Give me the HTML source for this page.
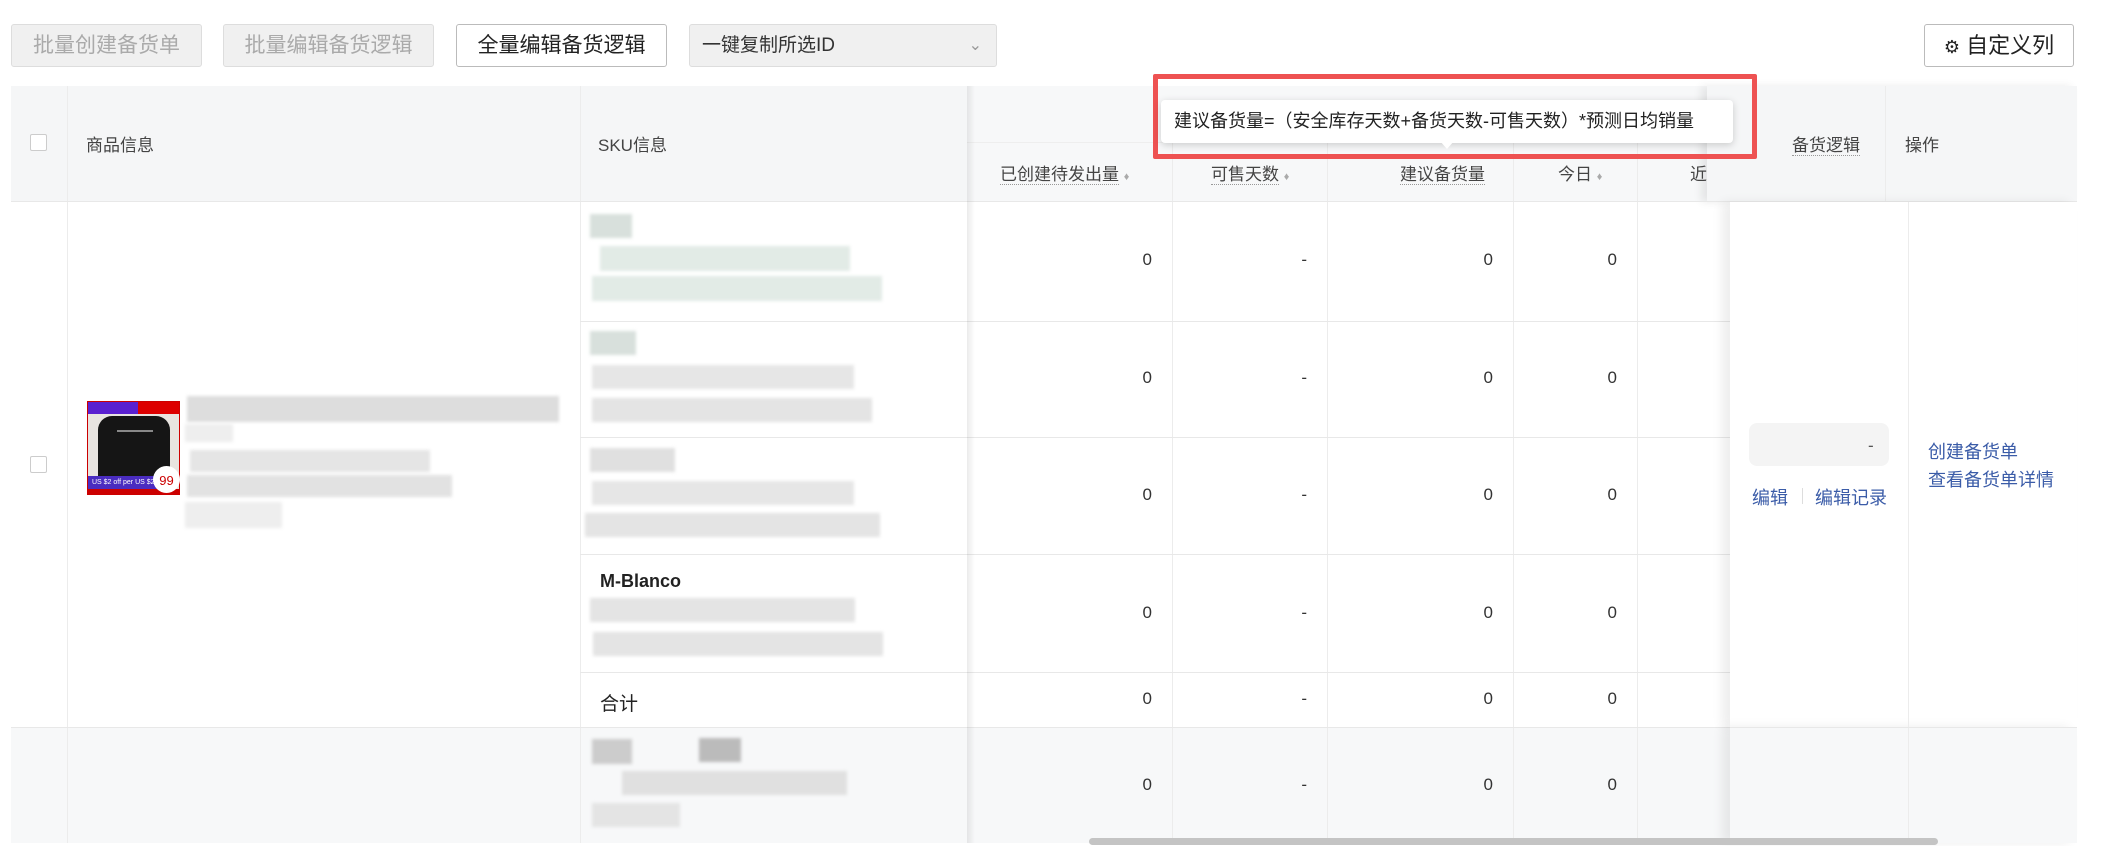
<!DOCTYPE html>
<html><head><meta charset="utf-8"><style>
*{margin:0;padding:0;box-sizing:border-box}
body{width:2121px;height:846px;background:#fff;position:relative;overflow:hidden;font-family:"Liberation Sans","Noto Sans CJK SC",sans-serif;color:#333}
.a{position:absolute}
.btn{position:absolute;top:24px;height:43px;border:1px solid #ddd;border-radius:3px;background:#f0f0f0;color:#aaa;font-size:21px;line-height:41px;text-align:center}
.hd{background:#f5f6f7}
.t{position:absolute;font-size:17px;color:#444;white-space:nowrap}
.hl{position:absolute;height:1px;background:#e8e8e8}
.vl{position:absolute;width:1px;background:#ececec}
.n{position:absolute;font-size:17px;color:#333;text-align:right}
.b{position:absolute;background:#ddd;filter:blur(1.5px)}
.lnk{color:#3b5ca8}
u{text-decoration:none;border-bottom:1px dotted #999}
.s{font-size:11px;color:#aaa}
</style></head><body>
<!-- toolbar -->
<div class="btn" style="left:11px;width:191px">批量创建备货单</div>
<div class="btn" style="left:223px;width:211px">批量编辑备货逻辑</div>
<div class="btn" style="left:456px;width:211px;background:#fff;border-color:#bbb;color:#222">全量编辑备货逻辑</div>
<div class="btn" style="left:689px;width:308px;text-align:left;padding-left:12px;color:#333;font-size:19px">一键复制所选ID<span style="position:absolute;right:14px;color:#999;font-size:16px">&#8964;</span></div>
<div class="btn" style="left:1924px;width:150px;background:#fff;border-color:#bbb;color:#222;font-size:22px"><span style="font-size:18px">⚙</span> 自定义列</div>

<!-- header -->
<div class="a hd" style="left:11px;top:86px;width:956px;height:116px"></div>
<div class="a hd" style="left:967px;top:86px;width:740px;height:116px;background:#f7f8f9"></div>
<div class="hl" style="left:967px;top:142px;width:740px;background:#eee"></div>
<div class="a hd" style="left:1707px;top:86px;width:370px;height:116px;box-shadow:-6px 0 8px rgba(0,0,0,.08)"></div>
<div class="a" style="left:30px;top:134px;width:17px;height:17px;border:1px solid #ccc;background:#fff;border-radius:2px"></div>
<div class="t" style="left:86px;top:131px">商品信息</div>
<div class="t" style="left:598px;top:131px">SKU信息</div>
<div class="t" style="left:1000px;top:160px"><u>已创建待发出量</u> <span class="s">♦</span></div>
<div class="t" style="left:1211px;top:160px"><u>可售天数</u> <span class="s">♦</span></div>
<div class="t" style="left:1400px;top:160px"><u>建议备货量</u></div>
<div class="t" style="left:1558px;top:160px">今日 <span class="s">♦</span></div>
<div class="t" style="left:1690px;top:160px">近</div>
<div class="t" style="left:1792px;top:131px"><u>备货逻辑</u></div>
<div class="t" style="left:1905px;top:131px">操作</div>
<div class="vl" style="left:67px;top:86px;height:116px"></div>
<div class="vl" style="left:580px;top:86px;height:116px"></div>
<div class="vl" style="left:1885px;top:86px;height:116px"></div>
<div class="vl" style="left:1172px;top:142px;height:60px"></div>
<div class="vl" style="left:1327px;top:142px;height:60px"></div>
<div class="vl" style="left:1513px;top:142px;height:60px"></div>
<div class="vl" style="left:1637px;top:142px;height:60px"></div>
<div class="hl" style="left:11px;top:201px;width:2066px"></div>

<!-- body -->
<div class="a" style="left:11px;top:727px;width:2066px;height:116px;background:#f7f8f9"></div>
<div class="vl" style="left:67px;top:202px;height:641px"></div>
<div class="vl" style="left:580px;top:202px;height:641px"></div>
<div class="vl" style="left:1172px;top:202px;height:641px"></div>
<div class="vl" style="left:1327px;top:202px;height:641px"></div>
<div class="vl" style="left:1513px;top:202px;height:641px"></div>
<div class="vl" style="left:1637px;top:202px;height:641px"></div>
<div class="hl" style="left:580px;top:321px;width:1150px"></div>
<div class="hl" style="left:580px;top:437px;width:1150px"></div>
<div class="hl" style="left:580px;top:554px;width:1150px"></div>
<div class="hl" style="left:580px;top:672px;width:1150px"></div>
<div class="hl" style="left:11px;top:727px;width:2066px"></div>
<div class="a" style="left:967px;top:86px;width:8px;height:757px;background:linear-gradient(90deg,rgba(0,0,0,.08),rgba(0,0,0,0))"></div>
<div class="a" style="left:30px;top:456px;width:17px;height:17px;border:1px solid #ccc;border-radius:2px"></div>

<!-- product -->
<div class="a" style="left:87px;top:401px;width:93px;height:94px;background:#c00"></div>
<div class="a" style="left:88px;top:402px;width:91px;height:92px;background:#e8e4e0"></div>
<div class="a" style="left:88px;top:402px;width:91px;height:12px;background:linear-gradient(90deg,#5a20d0 55%,#d00 55%)"></div>
<div class="a" style="left:98px;top:416px;width:72px;height:60px;background:#151515;border-radius:14px 14px 0 0"></div>
<div class="a" style="left:117px;top:430px;width:36px;height:2px;background:#888"></div>
<div class="a" style="left:88px;top:476px;width:70px;height:13px;background:#4a2cc0;color:#fff;font-size:7px;line-height:13px;padding-left:4px;white-space:nowrap">US $2 off per US $20</div>
<div class="a" style="left:88px;top:489px;width:91px;height:5px;background:#c00"></div>
<div class="a" style="left:153px;top:466px;width:27px;height:27px;background:#fff;border-radius:50%;color:#c00;font-size:13px;line-height:30px;text-align:center">99</div>
<div class="b" style="left:187px;top:396px;width:372px;height:26px"></div>
<div class="b" style="left:185px;top:424px;width:48px;height:18px;background:#eee"></div>
<div class="b" style="left:190px;top:450px;width:240px;height:22px;background:#e5e5e5"></div>
<div class="b" style="left:187px;top:475px;width:265px;height:22px;background:#e2e2e2"></div>
<div class="b" style="left:185px;top:502px;width:97px;height:26px;background:#eee"></div>

<!-- sku blurs -->
<div class="b" style="left:590px;top:214px;width:42px;height:24px;background:#d8e0dc"></div>
<div class="b" style="left:600px;top:246px;width:250px;height:25px;background:#e2ebe6"></div>
<div class="b" style="left:592px;top:276px;width:290px;height:25px;background:#e2ebe6"></div>
<div class="b" style="left:590px;top:331px;width:46px;height:24px;background:#d8e0dc"></div>
<div class="b" style="left:592px;top:365px;width:262px;height:24px;background:#e6e6e6"></div>
<div class="b" style="left:592px;top:398px;width:280px;height:24px;background:#e4e4e4"></div>
<div class="b" style="left:590px;top:448px;width:85px;height:24px;background:#e0e0e0"></div>
<div class="b" style="left:592px;top:481px;width:262px;height:24px;background:#e6e6e6"></div>
<div class="b" style="left:585px;top:513px;width:295px;height:24px;background:#e4e4e4"></div>
<div class="t" style="left:600px;top:571px;font-weight:bold;color:#222;font-size:18px">M-Blanco</div>
<div class="b" style="left:590px;top:598px;width:265px;height:24px;background:#e4e4e4"></div>
<div class="b" style="left:593px;top:632px;width:290px;height:24px;background:#e4e4e4"></div>
<div class="t" style="left:600px;top:689px;font-size:19px;color:#222">合计</div>
<div class="b" style="left:592px;top:739px;width:40px;height:25px;background:#ccc"></div>
<div class="b" style="left:699px;top:738px;width:42px;height:24px;background:#bbb"></div>
<div class="b" style="left:622px;top:771px;width:225px;height:24px;background:#e0e0e0"></div>
<div class="b" style="left:592px;top:803px;width:88px;height:24px;background:#e4e4e4"></div>

<!-- numbers -->
<div class="n" style="left:1100px;top:250px;width:52px">0</div>
<div class="n" style="left:1250px;top:250px;width:57px">-</div>
<div class="n" style="left:1440px;top:250px;width:53px">0</div>
<div class="n" style="left:1570px;top:250px;width:47px">0</div>
<div class="n" style="left:1100px;top:368px;width:52px">0</div>
<div class="n" style="left:1250px;top:368px;width:57px">-</div>
<div class="n" style="left:1440px;top:368px;width:53px">0</div>
<div class="n" style="left:1570px;top:368px;width:47px">0</div>
<div class="n" style="left:1100px;top:485px;width:52px">0</div>
<div class="n" style="left:1250px;top:485px;width:57px">-</div>
<div class="n" style="left:1440px;top:485px;width:53px">0</div>
<div class="n" style="left:1570px;top:485px;width:47px">0</div>
<div class="n" style="left:1100px;top:603px;width:52px">0</div>
<div class="n" style="left:1250px;top:603px;width:57px">-</div>
<div class="n" style="left:1440px;top:603px;width:53px">0</div>
<div class="n" style="left:1570px;top:603px;width:47px">0</div>
<div class="n" style="left:1100px;top:689px;width:52px">0</div>
<div class="n" style="left:1250px;top:689px;width:57px">-</div>
<div class="n" style="left:1440px;top:689px;width:53px">0</div>
<div class="n" style="left:1570px;top:689px;width:47px">0</div>
<div class="n" style="left:1100px;top:775px;width:52px">0</div>
<div class="n" style="left:1250px;top:775px;width:57px">-</div>
<div class="n" style="left:1440px;top:775px;width:53px">0</div>
<div class="n" style="left:1570px;top:775px;width:47px">0</div>

<!-- right fixed body -->
<div class="a" style="left:1730px;top:202px;width:347px;height:525px;background:#fff;box-shadow:-8px 0 10px rgba(0,0,0,.07)"></div>
<div class="a" style="left:1730px;top:727px;width:347px;height:116px;background:#f7f8f9;box-shadow:-8px 0 10px rgba(0,0,0,.07)"></div>
<div class="vl" style="left:1908px;top:202px;height:641px"></div>
<div class="hl" style="left:1730px;top:727px;width:347px"></div>
<div class="a" style="left:1749px;top:423px;width:140px;height:43px;background:#f4f4f4;border-radius:8px"></div>
<div class="t" style="left:1868px;top:436px;color:#555">-</div>
<div class="t lnk" style="left:1752px;top:484px;font-size:18px">编辑</div>
<div class="a" style="left:1802px;top:488px;width:1px;height:16px;background:#ddd"></div>
<div class="t lnk" style="left:1815px;top:484px;font-size:18px">编辑记录</div>
<div class="t lnk" style="left:1928px;top:438px;font-size:18px">创建备货单</div>
<div class="t lnk" style="left:1928px;top:466px;font-size:18px">查看备货单详情</div>

<!-- scrollbar -->
<div class="a" style="left:1089px;top:838px;width:849px;height:7px;background:#c4c4c4;border-radius:4px"></div>

<!-- tooltip -->
<div class="a" style="left:1153px;top:74px;width:604px;height:85px;border:5px solid #ee5252;border-radius:2px"></div>
<div class="a" style="left:1161px;top:100px;width:572px;height:43px;background:#fff;border-radius:4px;box-shadow:0 2px 8px rgba(0,0,0,.18);font-size:18px;line-height:43px;padding-left:13px;color:#222;white-space:nowrap">建议备货量=（安全库存天数+备货天数-可售天数）*预测日均销量</div>
<div class="a" style="left:1440px;top:141px;width:0;height:0;border-left:7px solid transparent;border-right:7px solid transparent;border-top:8px solid #fff"></div>
</body></html>
